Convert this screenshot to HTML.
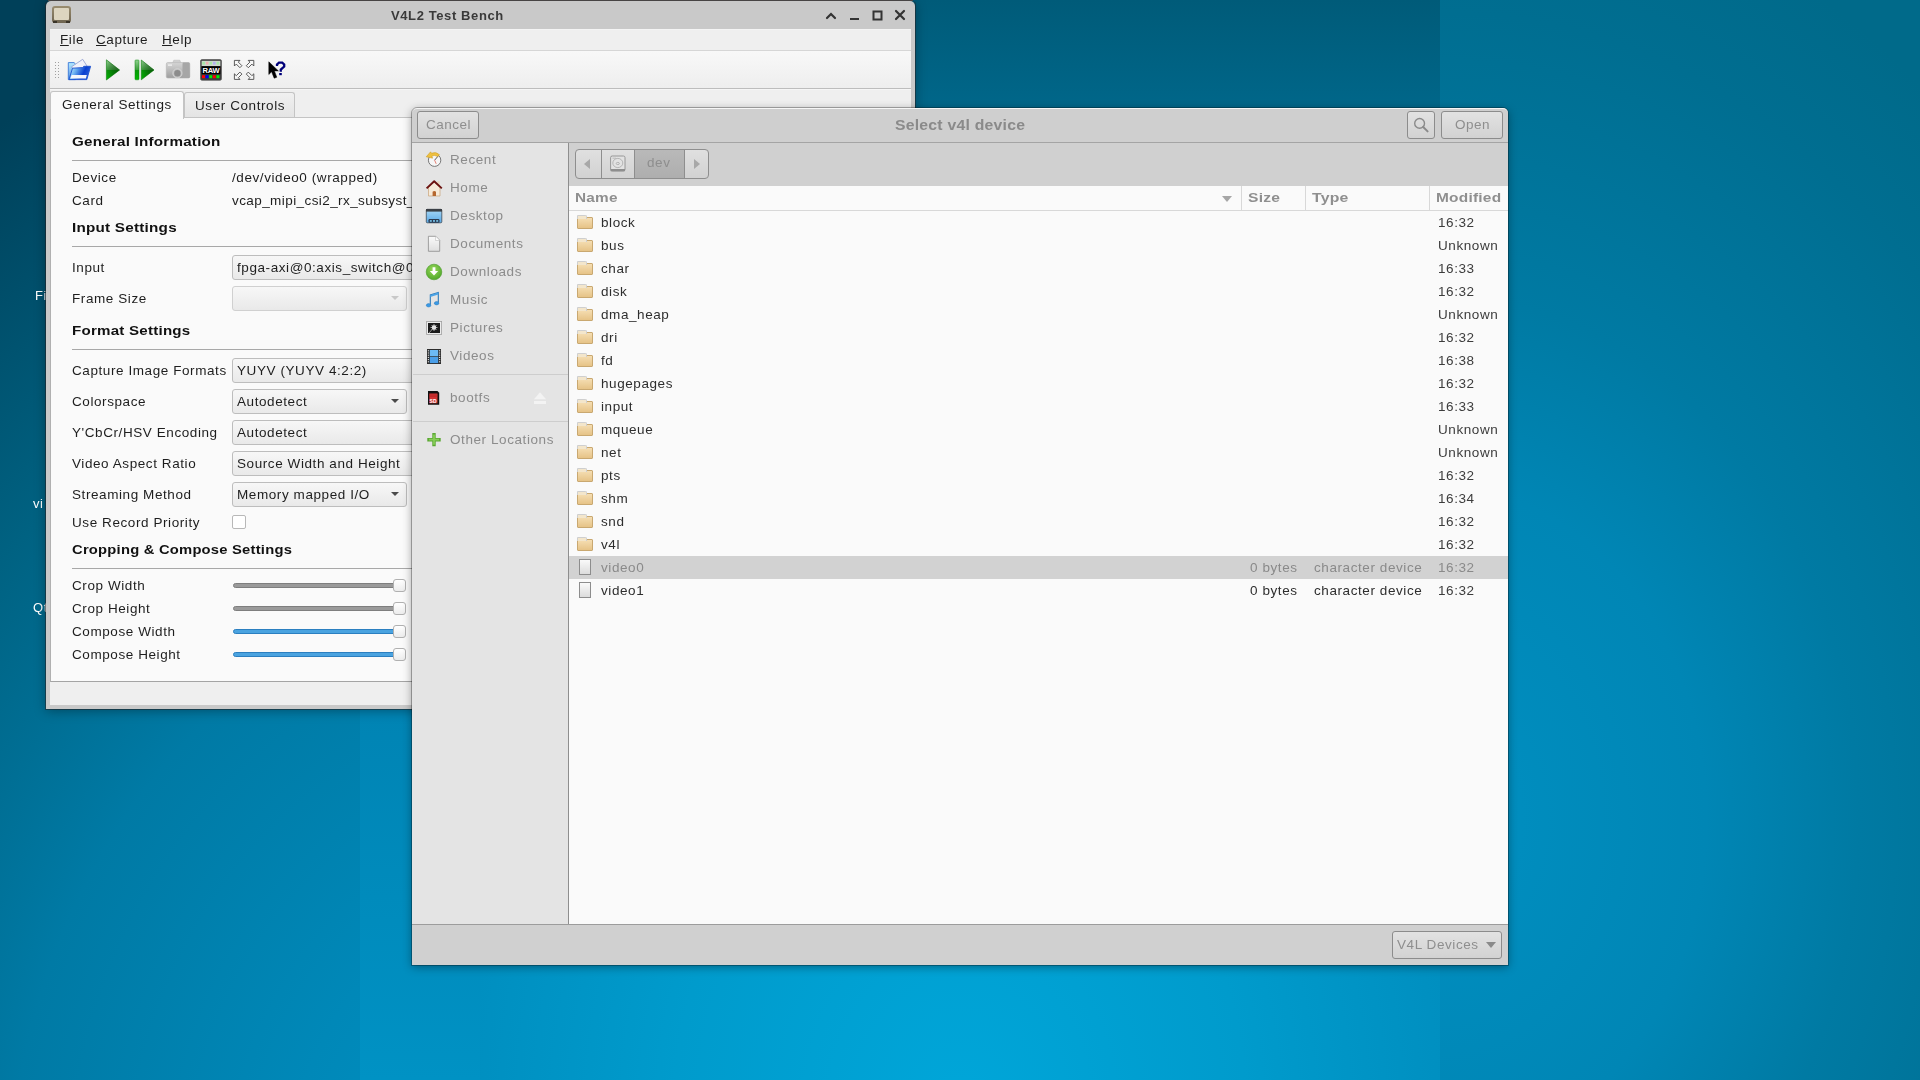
<!DOCTYPE html>
<html><head><meta charset="utf-8">
<style>
*{box-sizing:border-box;margin:0;padding:0}
html,body{width:1920px;height:1080px;overflow:hidden}
body{position:relative;font-family:"Liberation Sans",sans-serif;font-size:13.5px;letter-spacing:0.58px;
background:#006a8e;}
.a{position:absolute;white-space:nowrap}
.t{position:absolute;white-space:nowrap;line-height:16px;will-change:transform;margin-top:1px}
.b{font-weight:bold;letter-spacing:0.2px;transform-origin:0 50%}
/* main window */
#mw{position:absolute;left:46px;top:1px;width:869px;height:708px;background:#c9c9c9;border-radius:5px 5px 0 0;
 box-shadow:0 2px 12px rgba(0,0,0,0.35)}
#mwc{position:absolute;left:4px;top:28px;width:861px;height:676px;background:#efefef}
.hsep{position:absolute;height:1px;background:#a8a8a8}
.field{position:absolute;border:1px solid #bdbdbd;border-radius:3px;background:linear-gradient(#f7f7f7,#e9e9e9)}
.arrow{position:absolute;width:0;height:0;border-left:4px solid transparent;border-right:4px solid transparent;border-top:4px solid #4a4a4a}
.groove{position:absolute;left:233px;width:163px;height:5px;border-radius:3px}
.handle{position:absolute;left:393px;width:13px;height:13px;border:1px solid #b0b0b0;border-radius:3px;background:linear-gradient(#ffffff,#ececec)}
/* dialog */
#dlg{position:absolute;left:412px;top:108px;width:1096px;height:857px;background:#d0d0d0;border-radius:5px 5px 0 0;
 box-shadow:0 2px 10px rgba(0,0,0,0.38)}
.btn{position:absolute;border:1px solid #8c8c8c;border-radius:3px;background:linear-gradient(#e2e2e2,#d2d2d2);color:#8b8b8b;text-align:center}
.side{position:absolute;left:38px;color:#8c8c8c;font-size:13px}
.fn{position:absolute;left:189px;color:#2e2e2e}
.folder{position:absolute;left:165px;width:16px;height:12px;background:linear-gradient(#f5deb3,#e6c387);border:1px solid #c9a870;border-radius:1px}
.folder:before{content:"";position:absolute;left:-1px;top:-3px;width:8px;height:3px;background:#f3e6cc;border:1px solid #cfcfcf;border-bottom:none;border-radius:1px 2px 0 0}
.file{position:absolute;left:168px;width:12px;height:16px;border:1px solid #8d8d8d;background:linear-gradient(#fafafa,#dcdcdc)}
.mod{position:absolute;left:1024px;color:#3c3c3c}
</style></head><body>

<!-- wallpaper tiles -->
<div class="a" style="left:0;top:0;width:360px;height:1080px;background:radial-gradient(ellipse 1100px 1250px at 560px 1200px,#0094c6 0%,#0088b8 25%,#007aa5 50%,#006282 72%,#004059 100%)"></div>
<div class="a" style="left:360px;top:0;width:120px;height:1080px;background:linear-gradient(to bottom,#005f80 0%,#0084b4 66%,#0092c4 100%)"></div>
<div class="a" style="left:480px;top:0;width:960px;height:1080px;background:radial-gradient(ellipse 950px 1150px at 480px 1110px,#00a6d9 0%,#009bcc 30%,#008fc0 52%,#00769c 75%,#005977 100%)"></div>
<div class="a" style="left:915px;top:0;width:525px;height:112px;background:linear-gradient(#005b79,#00678a)"></div>
<div class="a" style="left:1440px;top:0;width:480px;height:1080px;background:radial-gradient(ellipse 760px 950px at 0px 820px,#0090c2 0%,#0086b5 35%,#007aa3 55%,#006e91 85%,#006a8a 100%)"></div>
<!-- desktop icon labels partially hidden -->
<div class="t" style="left:35px;top:287px;color:#fff;font-size:13px">Fi</div>
<div class="t" style="left:33px;top:495px;color:#fff;font-size:13px">vi</div>
<div class="t" style="left:33px;top:599px;color:#fff;font-size:13px">Qt</div>

<!-- MAIN WINDOW -->
<div id="mw"></div>
<div class="a" style="left:48px;top:0px;width:865px;height:1px;background:#555"></div>
<!-- app icon -->
<div class="a" style="left:52px;top:6px;width:19px;height:17px;border-radius:3px;background:linear-gradient(#9a8d70,#6e6450);"></div>
<div class="a" style="left:54px;top:8px;width:15px;height:12px;border-radius:1px;background:#ddd5c0"></div>
<div class="a" style="left:53px;top:21px;width:4px;height:2px;background:#3a3428"></div>
<div class="a" style="left:66px;top:21px;width:4px;height:2px;background:#3a3428"></div>
<div class="t b" style="left:391px;top:7px;font-size:13px;letter-spacing:0.6px;color:#3a3a3a">V4L2 Test Bench</div>
<!-- wm buttons -->
<svg class="a" style="left:820px;top:6px" width="90" height="20" viewBox="0 0 90 20">
 <path d="M7 12 L11 8 L15 12" stroke="#333" stroke-width="2.2" fill="none" stroke-linecap="round"/>
 <rect x="30" y="12" width="9" height="2" fill="#333"/>
 <rect x="53.5" y="5.5" width="8" height="8" stroke="#333" stroke-width="2" fill="none"/>
 <path d="M76 5 L84 13 M84 5 L76 13" stroke="#333" stroke-width="2.2" fill="none" stroke-linecap="round"/>
</svg>
<!-- content bg -->
<div class="a" style="left:50px;top:29px;width:861px;height:676px;background:#efefef"></div>
<!-- menubar -->
<div class="t" style="left:60px;top:31px;color:#1e1e1e"><u>F</u>ile</div>
<div class="t" style="left:96px;top:31px;color:#1e1e1e"><u>C</u>apture</div>
<div class="t" style="left:162px;top:31px;color:#1e1e1e"><u>H</u>elp</div>
<div class="a" style="left:50px;top:50px;width:861px;height:1px;background:#d6d6d6"></div>
<!-- toolbar -->
<div class="a" style="left:50px;top:51px;width:861px;height:37px;background:linear-gradient(#f8f8f8,#eeeeee)"></div>
<div class="a" style="left:50px;top:89px;width:861px;height:1px;background:#f6f6f6"></div>
<div class="a" style="left:50px;top:29px;width:861px;height:1px;background:#f4f4f4"></div>
<div class="a" style="left:50px;top:88px;width:861px;height:1px;background:#bdbdbd"></div>
<svg class="a" style="left:52px;top:54px" width="240" height="32" viewBox="52 54 240 32">
<defs>
<linearGradient id="tbFold" x1="0" y1="0" x2="1" y2="0.3"><stop offset="0" stop-color="#d8f6ff"/><stop offset="0.35" stop-color="#6fb4f2"/><stop offset="0.75" stop-color="#0a3fd0"/><stop offset="1" stop-color="#2458d8"/></linearGradient>
<linearGradient id="tbBack" x1="0" y1="0" x2="0" y2="1"><stop offset="0" stop-color="#b6eaff"/><stop offset="1" stop-color="#4f8fe0"/></linearGradient>
<linearGradient id="tbGreen" x1="0" y1="0" x2="0" y2="1"><stop offset="0" stop-color="#8fd08f"/><stop offset="0.48" stop-color="#3fa03f"/><stop offset="0.52" stop-color="#0a9a0a"/><stop offset="1" stop-color="#00b800"/></linearGradient>
<linearGradient id="tbGreenD" x1="0" y1="0" x2="1" y2="0"><stop offset="0" stop-color="#000" stop-opacity="0"/><stop offset="1" stop-color="#003300" stop-opacity="0.55"/></linearGradient>
<linearGradient id="tbCam" x1="0" y1="0" x2="0" y2="1"><stop offset="0" stop-color="#d6d6d6"/><stop offset="1" stop-color="#9e9e9e"/></linearGradient>
</defs>
<!-- grip -->
<g fill="#a0a0a0">
<rect x="55" y="62" width="1" height="1"/><rect x="58" y="62" width="1" height="1"/>
<rect x="55" y="65" width="1" height="1"/><rect x="58" y="65" width="1" height="1"/>
<rect x="55" y="68" width="1" height="1"/><rect x="58" y="68" width="1" height="1"/>
<rect x="55" y="71" width="1" height="1"/><rect x="58" y="71" width="1" height="1"/>
<rect x="55" y="74" width="1" height="1"/><rect x="58" y="74" width="1" height="1"/>
<rect x="55" y="77" width="1" height="1"/><rect x="58" y="77" width="1" height="1"/>
</g>
<!-- open folder -->
<path d="M68.3 62.6 L74 62.6 L75.5 64 L75.5 79.6 L68.3 79.6 Z" fill="url(#tbBack)" stroke="#3a78d8" stroke-width="0.9"/>
<path d="M71.5 66.8 L82.7 59.3 L87.3 66.5 L76 73 Z" fill="#f2f2fa" stroke="#7f8fc8" stroke-width="0.7"/>
<path d="M69 79.6 L72.5 68.2 L82.5 67.6 L83.8 66.3 L90.6 66.3 L86.8 79.6 Z" fill="url(#tbFold)" stroke="#1b4fcf" stroke-width="0.9" stroke-linejoin="round"/>
<path d="M70.5 78.6 L71.6 75 L86.8 75 L85.9 78.6 Z" fill="#f6f6fc"/>
<!-- play -->
<path d="M106.4 59.8 L119.6 70 L106.4 80 Z" fill="url(#tbGreen)" stroke="#0a7a0a" stroke-width="0.6" stroke-linejoin="round"/>
<path d="M106.4 59.8 L119.6 70 L106.4 80 Z" fill="url(#tbGreenD)"/>
<!-- step play -->
<rect x="135" y="60" width="4" height="19.8" rx="0.8" fill="url(#tbGreen)" stroke="#0a8a0a" stroke-width="0.5"/>
<path d="M141.3 60 L154 70 L141.3 79.8 Z" fill="url(#tbGreen)" stroke="#0a7a0a" stroke-width="0.6" stroke-linejoin="round"/>
<path d="M141.3 60 L154 70 L141.3 79.8 Z" fill="url(#tbGreenD)"/>
<!-- camera -->
<rect x="166.3" y="62.5" width="23.5" height="15.5" rx="1.5" fill="url(#tbCam)" stroke="#b4b4b4" stroke-width="0.6"/>
<rect x="182.5" y="62.6" width="7.2" height="15.3" rx="1.2" fill="#a6a6a6"/>
<path d="M172.8 62.6 L173.8 60.2 L179.8 60.2 L180.8 62.6 Z" fill="#cfcfcf" stroke="#b8b8b8" stroke-width="0.5"/>
<rect x="168" y="64.3" width="4" height="1.6" fill="#ececec"/>
<circle cx="177.4" cy="73.3" r="4.6" fill="#bdbdbd" stroke="#d8d8d8" stroke-width="0.8"/>
<circle cx="177.4" cy="73.3" r="3.2" fill="#8c8c8c"/>
<!-- RAW -->
<rect x="200.5" y="59.5" width="21" height="20.8" rx="1.6" fill="#3c3c3c" stroke="#5a5a5a" stroke-width="0.7"/>
<rect x="201.6" y="60.8" width="18.8" height="5.4" fill="#cfd8cf"/>
<rect x="202.3" y="61.8" width="2.6" height="2.8" fill="#a6e8a6"/><rect x="205.9" y="61.8" width="2.6" height="2.8" fill="#f0b0b0"/><rect x="209.5" y="61.8" width="2.6" height="2.8" fill="#a6e8a6"/><rect x="213" y="61.8" width="2.6" height="2.8" fill="#b4b4f0"/><rect x="216.6" y="61.8" width="2.6" height="2.8" fill="#a6e8a6"/>
<rect x="201.6" y="66.2" width="18.8" height="8" fill="#000"/>
<text x="211" y="73.2" text-anchor="middle" font-family="Liberation Sans" font-weight="bold" font-size="7.6" fill="#fff" letter-spacing="-0.2">RAW</text>
<rect x="202" y="75.2" width="3" height="3" fill="#ff0000"/><rect x="205.6" y="75.2" width="3" height="3" fill="#0000ff"/><rect x="209.2" y="75.2" width="3" height="3" fill="#00ee00"/><rect x="212.8" y="75.2" width="3" height="3" fill="#ff0000"/><rect x="216.4" y="75.2" width="3" height="3" fill="#00ee00"/>
<!-- fullscreen arrows -->
<g fill="#f8f8f8" stroke="#4a4a4a" stroke-width="0.9" stroke-linejoin="miter">
<path d="M234.4 60.4 L240 60.4 L238.3 62.1 L241.9 65.7 L239.9 67.7 L236.3 64.1 L234.4 66 Z"/>
<path d="M253.8 60.4 L248.2 60.4 L249.9 62.1 L246.3 65.7 L248.3 67.7 L251.9 64.1 L253.8 66 Z"/>
<path d="M234.4 79.4 L240 79.4 L238.3 77.7 L241.9 74.1 L239.9 72.1 L236.3 75.7 L234.4 73.8 Z"/>
<path d="M253.8 79.4 L248.2 79.4 L249.9 77.7 L246.3 74.1 L248.3 72.1 L251.9 75.7 L253.8 73.8 Z"/>
</g>
<!-- what's this -->
<path d="M268.8 61.8 L268.8 74.5 L271.6 71.8 L274.2 78.2 L276.8 77.2 L274.4 70.9 L278.4 70.9 Z" fill="#000" stroke="#000" stroke-width="0.5" stroke-linejoin="round"/>
<path d="M277 66 L277 64.5 L279 62.6 L282.2 62.6 L284.2 64.5 L284.2 66.6 L280.8 69.6 L280.8 71.8" stroke="#00007a" stroke-width="2.3" fill="none" stroke-linejoin="miter"/>
<rect x="279.2" y="73" width="2.6" height="2.2" fill="#00007a"/>
</svg>

<!-- tabs -->
<div class="a" style="left:184px;top:92px;width:111px;height:26px;border:1px solid #c4c4c4;border-bottom:none;border-radius:3px 3px 0 0;background:linear-gradient(#f0f0f0,#e4e4e4)"></div>
<div class="t" style="left:195px;top:97px;color:#1e1e1e">User Controls</div>
<div class="a" style="left:50px;top:117px;width:861px;height:565px;border:1px solid #c4c4c4;border-bottom-color:#a4a4a4;border-left-color:#b0b0b0;border-right:none;background:#fafafa"></div>
<div class="a" style="left:50px;top:91px;width:134px;height:28px;border:1px solid #c4c4c4;border-bottom:none;border-radius:3px 3px 0 0;background:#fafafa"></div>
<div class="t" style="left:62px;top:96px;color:#1e1e1e">General Settings</div>
<!-- pane content -->
<div class="t b" style="transform:scaleX(1.125);left:72px;top:133px;color:#111">General Information</div>
<div class="hsep" style="left:72px;top:160px;width:340px"></div>
<div class="t" style="left:72px;top:169px;color:#1e1e1e">Device</div>
<div class="t" style="left:232px;top:169px;color:#1e1e1e">/dev/video0 (wrapped)</div>
<div class="t" style="left:72px;top:192px;color:#1e1e1e">Card</div>
<div class="t" style="left:232px;top:192px;color:#1e1e1e;letter-spacing:0.42px">vcap_mipi_csi2_rx_subsyst_</div>
<div class="t b" style="transform:scaleX(1.13);left:72px;top:219px;color:#111">Input Settings</div>
<div class="hsep" style="left:72px;top:246px;width:340px"></div>
<div class="t" style="left:72px;top:259px;color:#1e1e1e">Input</div>
<div class="field" style="left:232px;top:255px;width:200px;height:25px"></div>
<div class="t" style="left:237px;top:259px;color:#1e1e1e">fpga-axi@0:axis_switch@0</div>
<div class="t" style="left:72px;top:290px;color:#1e1e1e">Frame Size</div>
<div class="field" style="left:232px;top:286px;width:175px;height:25px;border-color:#d0d0d0"></div>
<div class="arrow" style="left:391px;top:296px;border-top-color:#c8c8c8"></div>
<div class="t b" style="transform:scaleX(1.12);left:72px;top:322px;color:#111">Format Settings</div>
<div class="hsep" style="left:72px;top:349px;width:340px"></div>
<div class="t" style="left:72px;top:362px;color:#1e1e1e">Capture Image Formats</div>
<div class="field" style="left:232px;top:358px;width:200px;height:25px"></div>
<div class="t" style="left:237px;top:362px;color:#1e1e1e">YUYV (YUYV 4:2:2)</div>
<div class="t" style="left:72px;top:393px;color:#1e1e1e">Colorspace</div>
<div class="field" style="left:232px;top:389px;width:175px;height:25px"></div>
<div class="t" style="left:237px;top:393px;color:#1e1e1e">Autodetect</div>
<div class="arrow" style="left:391px;top:399px"></div>
<div class="t" style="left:72px;top:424px;color:#1e1e1e">Y'CbCr/HSV Encoding</div>
<div class="field" style="left:232px;top:420px;width:200px;height:25px"></div>
<div class="t" style="left:237px;top:424px;color:#1e1e1e">Autodetect</div>
<div class="t" style="left:72px;top:455px;color:#1e1e1e">Video Aspect Ratio</div>
<div class="field" style="left:232px;top:451px;width:200px;height:25px"></div>
<div class="t" style="left:237px;top:455px;color:#1e1e1e">Source Width and Height</div>
<div class="t" style="left:72px;top:486px;color:#1e1e1e">Streaming Method</div>
<div class="field" style="left:232px;top:482px;width:175px;height:25px"></div>
<div class="t" style="left:237px;top:486px;color:#1e1e1e">Memory mapped I/O</div>
<div class="arrow" style="left:391px;top:492px"></div>
<div class="t" style="left:72px;top:514px;color:#1e1e1e">Use Record Priority</div>
<div class="a" style="left:232px;top:515px;width:14px;height:14px;border:1px solid #b8b8b8;border-radius:2px;background:#fff"></div>
<div class="t b" style="transform:scaleX(1.094);left:72px;top:541px;color:#111">Cropping &amp; Compose Settings</div>
<div class="hsep" style="left:72px;top:568px;width:340px"></div>
<div class="t" style="left:72px;top:577px;color:#1e1e1e">Crop Width</div>
<div class="groove" style="top:583px;background:#9a9a9a;border:1px solid #7e7e7e"></div>
<div class="handle" style="top:579px"></div>
<div class="t" style="left:72px;top:600px;color:#1e1e1e">Crop Height</div>
<div class="groove" style="top:606px;background:#9a9a9a;border:1px solid #7e7e7e"></div>
<div class="handle" style="top:602px"></div>
<div class="t" style="left:72px;top:623px;color:#1e1e1e">Compose Width</div>
<div class="groove" style="top:629px;background:#4aa3e0;border:1px solid #2b7fc0"></div>
<div class="handle" style="top:625px"></div>
<div class="t" style="left:72px;top:646px;color:#1e1e1e">Compose Height</div>
<div class="groove" style="top:652px;background:#4aa3e0;border:1px solid #2b7fc0"></div>
<div class="handle" style="top:648px"></div>
<!-- status bar -->
<div class="a" style="left:50px;top:682px;width:861px;height:23px;background:#efefef"></div>
<div class="a" style="left:45px;top:0px;width:871px;height:710px;border:1px solid rgba(40,30,30,0.5);border-top-color:rgba(40,30,30,0.3);border-radius:5px 5px 0 0;pointer-events:none"></div>

<!-- DIALOG -->
<div id="dlg"></div>
<div class="a" style="left:412px;top:108px;width:1096px;height:35px;border-radius:5px 5px 0 0;background:#cfcfcf;border-top:1px solid #f6f6f6"></div>
<div class="a" style="left:412px;top:142px;width:1096px;height:1px;background:#a4a4a4"></div>
<div class="btn" style="left:417px;top:111px;width:62px;height:28px"></div>
<div class="t" style="left:426px;top:116px;color:#8e8e8e;letter-spacing:0.5px">Cancel</div>
<div class="t b" style="transform:scaleX(1.127);left:895px;top:116px;color:#8a8a8a;font-size:14px">Select v4l device</div>
<div class="btn" style="left:1407px;top:111px;width:28px;height:28px"></div>
<svg class="a" style="left:1410px;top:114px" width="22" height="22" viewBox="0 0 22 22"><circle cx="9.6" cy="9.4" r="4.9" stroke="#8a8a8a" stroke-width="1.4" fill="none"/><path d="M13.2 13 L17.6 17.4" stroke="#8a8a8a" stroke-width="2" stroke-linecap="round"/></svg>
<div class="btn" style="left:1441px;top:111px;width:62px;height:28px"></div>
<div class="t" style="left:1455px;top:116px;color:#8e8e8e;letter-spacing:0.5px">Open</div>
<div class="a" style="left:412px;top:143px;width:157px;height:781px;background:#e4e4e4;border-right:1px solid #8e8e8e"></div>
<div class="t" style="left:450px;top:151px;color:#8c8c8c">Recent</div>
<div class="t" style="left:450px;top:179px;color:#8c8c8c">Home</div>
<div class="t" style="left:450px;top:207px;color:#8c8c8c">Desktop</div>
<div class="t" style="left:450px;top:235px;color:#8c8c8c">Documents</div>
<div class="t" style="left:450px;top:263px;color:#8c8c8c">Downloads</div>
<div class="t" style="left:450px;top:291px;color:#8c8c8c">Music</div>
<div class="t" style="left:450px;top:319px;color:#8c8c8c">Pictures</div>
<div class="t" style="left:450px;top:347px;color:#8c8c8c">Videos</div>
<div class="t" style="left:450px;top:389px;color:#8c8c8c">bootfs</div>
<div class="t" style="left:450px;top:431px;color:#8c8c8c">Other Locations</div>
<div class="a" style="left:413px;top:374px;width:155px;height:1px;background:#cdcdcd"></div>
<div class="a" style="left:413px;top:421px;width:155px;height:1px;background:#cdcdcd"></div>
<svg class="a" style="left:420px;top:148px" width="30" height="300" viewBox="420 148 30 300">
<defs>
<linearGradient id="gY" x1="0" y1="0" x2="0" y2="1"><stop offset="0" stop-color="#f5d468"/><stop offset="1" stop-color="#d9a520"/></linearGradient>
<linearGradient id="gB" x1="0" y1="0" x2="0" y2="1"><stop offset="0" stop-color="#a8d8f6"/><stop offset="1" stop-color="#5aa9e6"/></linearGradient>
<linearGradient id="gDoc" x1="0" y1="0" x2="0" y2="1"><stop offset="0" stop-color="#fbfbfb"/><stop offset="1" stop-color="#dedede"/></linearGradient>
<radialGradient id="gG" cx="0.45" cy="0.35" r="0.7"><stop offset="0" stop-color="#9ad85c"/><stop offset="1" stop-color="#4aa525"/></radialGradient>
</defs>
<!-- Recent -->
<circle cx="434.6" cy="160.2" r="6.2" fill="#f6f6f6" stroke="#6a6a6a" stroke-width="0.9"/>
<path d="M434.6 160.2 L438.2 156" stroke="#333" stroke-width="0.8"/>
<path d="M434.6 160.2 L436.2 163.8" stroke="#e06050" stroke-width="0.8"/>
<path d="M439.5 154.8 Q436 151.2 431.5 153.2 L430.6 151.8 L426.2 156.8 L432.6 158.2 L431.9 156 Q434.5 154.6 437.6 156.6 Z" fill="#eec040" stroke="#c8961a" stroke-width="0.5" stroke-linejoin="round"/>
<!-- Home -->
<path d="M428.5 187 L428.5 196 L440 196 L440 187 L434.2 182 Z" fill="#f6ead8" stroke="#c8a37a" stroke-width="0.7"/>
<rect x="437.2" y="181.2" width="2.4" height="4.5" fill="#ead6bc"/>
<path d="M426.6 188.4 L434.2 181.2 L441.8 188.4" stroke="#6b1210" stroke-width="1.9" fill="none" stroke-linejoin="round"/>
<path d="M432.6 196 L432.6 191.8 Q434.3 190 436 191.8 L436 196 Z" fill="#b5672e"/>
<!-- Desktop -->
<rect x="426.3" y="209.3" width="15.5" height="13.5" rx="1" fill="url(#gB)" stroke="#2f3a44" stroke-width="0.7"/>
<rect x="426" y="209" width="16" height="2.6" fill="#3a3f45"/>
<rect x="428.5" y="219" width="11" height="3.8" rx="1.2" fill="#2a3a50"/>
<rect x="429.8" y="220.2" width="2" height="1.5" fill="#7fd0f8"/><rect x="433" y="220.2" width="2" height="1.5" fill="#7fd0f8"/><rect x="436.2" y="220.2" width="2" height="1.5" fill="#7fd0f8"/>
<!-- Documents -->
<path d="M428.4 236.3 L435.8 236.3 L439.7 240.3 L439.7 251.3 L428.4 251.3 Z" fill="url(#gDoc)" stroke="#8c8c8c" stroke-width="0.8"/>
<path d="M435.6 236.5 L435.6 240.5 L439.5 240.5" fill="#fff" stroke="#b0b0b0" stroke-width="0.5"/>
<!-- Downloads -->
<circle cx="434" cy="272" r="7.8" fill="url(#gG)" stroke="#4c9a2a" stroke-width="0.6"/>
<path d="M432.6 267.3 L435.4 267.3 L435.4 271 L438.2 271 L434 275.5 L429.8 271 L432.6 271 Z" fill="#fff"/>
<!-- Music -->
<path d="M430.3 304.5 L430.3 295 L438.3 292.5 L438.3 302.5" stroke="#2a78b8" stroke-width="1.1" fill="none"/>
<path d="M430.3 295 L438.3 292.5 L438.3 294.6 L430.3 297 Z" fill="#4aa3e6"/>
<ellipse cx="428.6" cy="305.3" rx="2.3" ry="1.7" fill="#3a9ae6" stroke="#2a78b8" stroke-width="0.5"/>
<ellipse cx="436.6" cy="303.2" rx="2.3" ry="1.7" fill="#3a9ae6" stroke="#2a78b8" stroke-width="0.5"/>
<!-- Pictures -->
<rect x="426.6" y="321.5" width="15" height="13" fill="#ececec" stroke="#a0a0a0" stroke-width="0.8"/>
<rect x="428" y="323" width="12" height="10" fill="#1c1c1c"/>
<circle cx="434" cy="327.5" r="2.2" fill="#f0f0f0"/>
<path d="M434 324 L434 331 M430.5 327.5 L437.5 327.5 M431.5 325 L436.5 330 M436.5 325 L431.5 330" stroke="#e0e0e0" stroke-width="0.7"/>
<path d="M429 333 L432 329.5" stroke="#ddd" stroke-width="0.6"/>
<!-- Videos -->
<rect x="427" y="349" width="14" height="15" fill="#2c2c2c"/>
<rect x="429.8" y="350" width="8.4" height="6.3" fill="#6cbaf5"/>
<rect x="429.8" y="357" width="8.4" height="6.1" fill="#4a9ee8"/>
<g fill="#eee"><rect x="427.8" y="350.3" width="1.2" height="1"/><rect x="427.8" y="352.5" width="1.2" height="1"/><rect x="427.8" y="354.7" width="1.2" height="1"/><rect x="427.8" y="356.9" width="1.2" height="1"/><rect x="427.8" y="359.1" width="1.2" height="1"/><rect x="427.8" y="361.3" width="1.2" height="1"/>
<rect x="439" y="350.3" width="1.2" height="1"/><rect x="439" y="352.5" width="1.2" height="1"/><rect x="439" y="354.7" width="1.2" height="1"/><rect x="439" y="356.9" width="1.2" height="1"/><rect x="439" y="359.1" width="1.2" height="1"/><rect x="439" y="361.3" width="1.2" height="1"/></g>
<!-- bootfs SD -->
<path d="M428 391 L437.5 391 L439.2 392.8 L439.2 404.8 L428 404.8 Z" fill="#111"/>
<rect x="429.3" y="393.5" width="8.2" height="9.8" fill="#d03232"/>
<path d="M429.3 395 L437.5 395 M429.3 396.3 L437.5 396.3" stroke="#a82020" stroke-width="0.5"/>
<text x="429.6" y="402.6" font-family="Liberation Sans" font-weight="bold" font-size="5" fill="#fff" letter-spacing="0">SD</text>
<!-- Other locations plus -->
<path d="M434 434.6 L434 444.6 M429 439.7 L439 439.7" stroke="#5aa832" stroke-width="3.4" stroke-linecap="square"/>
<path d="M434 435.4 L434 443.8 M429.8 439.7 L438.2 439.7" stroke="#86cc56" stroke-width="1.8" stroke-linecap="square"/>
</svg>
<!-- eject -->
<svg class="a" style="left:533px;top:391px" width="14" height="14" viewBox="533 391 14 14"><path d="M534 399.3 L540 392.3 L546 399.3 Z" fill="#f3f3f3"/><rect x="534" y="401" width="12" height="3" fill="#f3f3f3"/></svg>

<div class="a" style="left:569px;top:143px;width:939px;height:43px;background:#d0d0d0"></div>
<div class="a" style="left:575px;top:149px;width:134px;height:30px;border:1px solid #8e8e8e;border-radius:4px;background:linear-gradient(#e0e0e0,#d2d2d2)"></div>
<div class="a" style="left:634px;top:150px;width:50px;height:28px;background:linear-gradient(#b9b9b9,#aeaeae)"></div>
<div class="a" style="left:601px;top:150px;width:1px;height:28px;background:#8e8e8e"></div>
<div class="a" style="left:634px;top:150px;width:1px;height:28px;background:#8e8e8e"></div>
<div class="a" style="left:684px;top:150px;width:1px;height:28px;background:#8e8e8e"></div>
<div class="a" style="left:584px;top:159px;width:0;height:0;border-top:5px solid transparent;border-bottom:5px solid transparent;border-right:6px solid #a8a8a8"></div>
<div class="a" style="left:694px;top:159px;width:0;height:0;border-top:5px solid transparent;border-bottom:5px solid transparent;border-left:6px solid #a8a8a8"></div>
<svg class="a" style="left:608px;top:154px" width="20" height="20" viewBox="608 154 20 20"><rect x="610.6" y="156" width="14.4" height="15" rx="1.6" fill="#e2e2e2" stroke="#8e8e8e" stroke-width="0.9"/><rect x="610.6" y="169" width="14.4" height="2.2" fill="#8e8e8e"/><ellipse cx="617.8" cy="163" rx="5" ry="4.6" fill="none" stroke="#a8a8a8" stroke-width="0.8"/><ellipse cx="617.8" cy="163.5" rx="1.6" ry="1.1" fill="none" stroke="#a0a0a0" stroke-width="0.7"/><path d="M612.5 158.2 L616 158.2" stroke="#b0b0b0" stroke-width="0.8"/></svg>
<div class="t" style="left:647px;top:154px;color:#8e8e8e">dev</div>
<div class="a" style="left:569px;top:186px;width:939px;height:738px;background:#fafafa"></div>
<div class="a" style="left:569px;top:210px;width:939px;height:1px;background:#d8d8d8"></div>
<div class="a" style="left:1241px;top:186px;width:1px;height:24px;background:#d8d8d8"></div>
<div class="a" style="left:1305px;top:186px;width:1px;height:24px;background:#d8d8d8"></div>
<div class="a" style="left:1429px;top:186px;width:1px;height:24px;background:#d8d8d8"></div>
<div class="t b" style="transform:scaleX(1.136);left:575px;top:189px;color:#8f8f8f">Name</div>
<div class="t b" style="transform:scaleX(1.155);left:1248px;top:189px;color:#8f8f8f">Size</div>
<div class="t b" style="transform:scaleX(1.17);left:1312px;top:189px;color:#8f8f8f">Type</div>
<div class="t b" style="transform:scaleX(1.144);left:1436px;top:189px;color:#8f8f8f">Modified</div>
<div class="a" style="left:1222px;top:196px;width:0;height:0;border-left:5px solid transparent;border-right:5px solid transparent;border-top:6px solid #a6a6a6"></div>
<div class="folder" style="left:577px;top:217px"></div>
<div class="t" style="left:601px;top:214px;color:#2e2e2e">block</div>
<div class="t" style="left:1438px;top:214px;color:#3c3c3c">16:32</div>
<div class="folder" style="left:577px;top:240px"></div>
<div class="t" style="left:601px;top:237px;color:#2e2e2e">bus</div>
<div class="t" style="left:1438px;top:237px;color:#3c3c3c">Unknown</div>
<div class="folder" style="left:577px;top:263px"></div>
<div class="t" style="left:601px;top:260px;color:#2e2e2e">char</div>
<div class="t" style="left:1438px;top:260px;color:#3c3c3c">16:33</div>
<div class="folder" style="left:577px;top:286px"></div>
<div class="t" style="left:601px;top:283px;color:#2e2e2e">disk</div>
<div class="t" style="left:1438px;top:283px;color:#3c3c3c">16:32</div>
<div class="folder" style="left:577px;top:309px"></div>
<div class="t" style="left:601px;top:306px;color:#2e2e2e">dma_heap</div>
<div class="t" style="left:1438px;top:306px;color:#3c3c3c">Unknown</div>
<div class="folder" style="left:577px;top:332px"></div>
<div class="t" style="left:601px;top:329px;color:#2e2e2e">dri</div>
<div class="t" style="left:1438px;top:329px;color:#3c3c3c">16:32</div>
<div class="folder" style="left:577px;top:355px"></div>
<div class="t" style="left:601px;top:352px;color:#2e2e2e">fd</div>
<div class="t" style="left:1438px;top:352px;color:#3c3c3c">16:38</div>
<div class="folder" style="left:577px;top:378px"></div>
<div class="t" style="left:601px;top:375px;color:#2e2e2e">hugepages</div>
<div class="t" style="left:1438px;top:375px;color:#3c3c3c">16:32</div>
<div class="folder" style="left:577px;top:401px"></div>
<div class="t" style="left:601px;top:398px;color:#2e2e2e">input</div>
<div class="t" style="left:1438px;top:398px;color:#3c3c3c">16:33</div>
<div class="folder" style="left:577px;top:424px"></div>
<div class="t" style="left:601px;top:421px;color:#2e2e2e">mqueue</div>
<div class="t" style="left:1438px;top:421px;color:#3c3c3c">Unknown</div>
<div class="folder" style="left:577px;top:447px"></div>
<div class="t" style="left:601px;top:444px;color:#2e2e2e">net</div>
<div class="t" style="left:1438px;top:444px;color:#3c3c3c">Unknown</div>
<div class="folder" style="left:577px;top:470px"></div>
<div class="t" style="left:601px;top:467px;color:#2e2e2e">pts</div>
<div class="t" style="left:1438px;top:467px;color:#3c3c3c">16:32</div>
<div class="folder" style="left:577px;top:493px"></div>
<div class="t" style="left:601px;top:490px;color:#2e2e2e">shm</div>
<div class="t" style="left:1438px;top:490px;color:#3c3c3c">16:34</div>
<div class="folder" style="left:577px;top:516px"></div>
<div class="t" style="left:601px;top:513px;color:#2e2e2e">snd</div>
<div class="t" style="left:1438px;top:513px;color:#3c3c3c">16:32</div>
<div class="folder" style="left:577px;top:539px"></div>
<div class="t" style="left:601px;top:536px;color:#2e2e2e">v4l</div>
<div class="t" style="left:1438px;top:536px;color:#3c3c3c">16:32</div>
<div class="a" style="left:569px;top:556px;width:939px;height:23px;background:#d2d2d2"></div>
<div class="file" style="left:579px;top:559px"></div>
<div class="t" style="left:601px;top:559px;color:#8a8a8a">video0</div>
<div class="t" style="left:1438px;top:559px;color:#8a8a8a">16:32</div>
<div class="t" style="left:1250px;top:559px;color:#8a8a8a">0 bytes</div>
<div class="t" style="left:1314px;top:559px;color:#8a8a8a">character device</div>
<div class="file" style="left:579px;top:582px"></div>
<div class="t" style="left:601px;top:582px;color:#2e2e2e">video1</div>
<div class="t" style="left:1438px;top:582px;color:#3c3c3c">16:32</div>
<div class="t" style="left:1250px;top:582px;color:#2e2e2e">0 bytes</div>
<div class="t" style="left:1314px;top:582px;color:#2e2e2e">character device</div>
<div class="a" style="left:412px;top:924px;width:1096px;height:1px;background:#9c9c9c"></div>
<div class="a" style="left:412px;top:925px;width:1096px;height:40px;background:#d0d0d0"></div>
<div class="btn" style="left:1392px;top:931px;width:110px;height:28px"></div>
<div class="t" style="left:1397px;top:936px;color:#8e8e8e">V4L Devices</div>
<div class="a" style="left:1486px;top:942px;width:0;height:0;border-left:5px solid transparent;border-right:5px solid transparent;border-top:6px solid #8a8a8a"></div>
<div class="a" style="left:411px;top:107px;width:1098px;height:859px;border:1px solid rgba(0,0,0,0.28);border-radius:6px 6px 0 0;pointer-events:none"></div>

</body></html>
